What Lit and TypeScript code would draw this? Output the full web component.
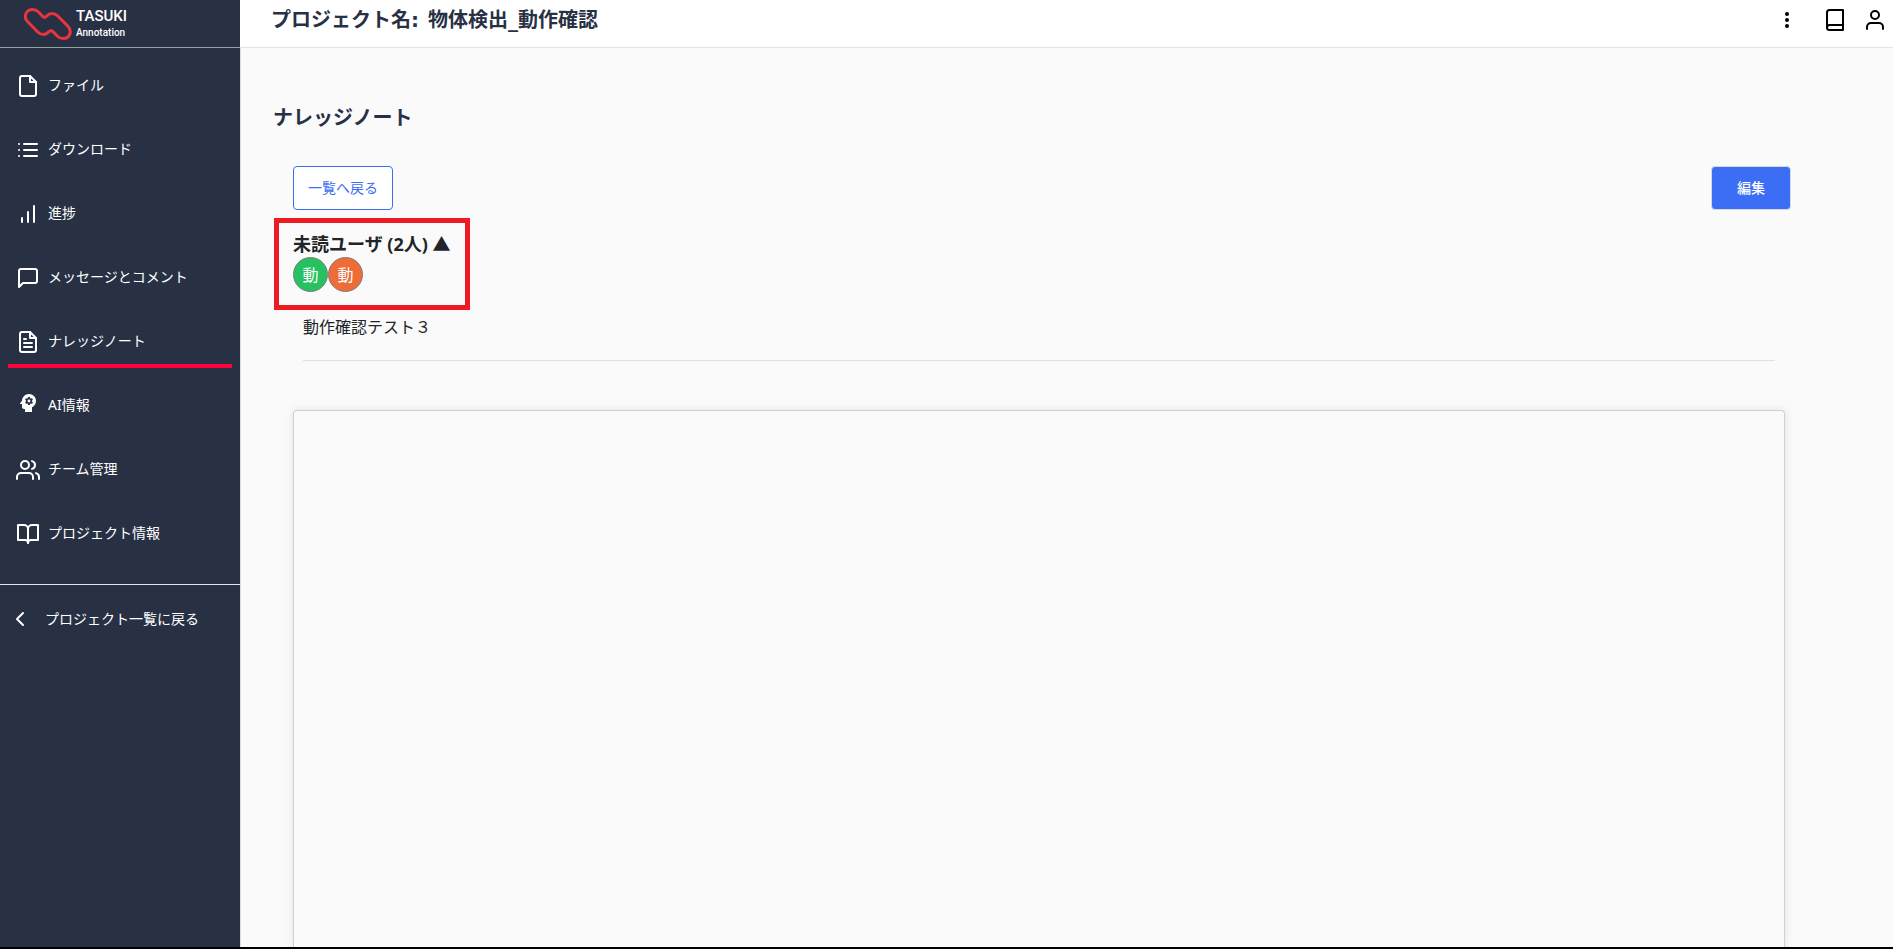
import { LitElement, html, svg, css } from "lit";
import type { SVGTemplateResult } from "lit";
import { customElement, property } from "lit/decorators.js";
import { classMap } from "lit/directives/class-map.js";

const icons: Record<string, SVGTemplateResult> = {
  file: svg`<path d="M14 2H6a2 2 0 0 0-2 2v16a2 2 0 0 0 2 2h12a2 2 0 0 0 2-2V8z"/><path d="M14 2v6h6"/>`,
  list: svg`<path d="M8 6h13M8 12h13M8 18h13M3 6h.01M3 12h.01M3 18h.01"/>`,
  bars: svg`<path d="M6 20v-4M12 20V10M18 20V4"/>`,
  message: svg`<path d="M21 15a2 2 0 0 1-2 2H7l-4 4V5a2 2 0 0 1 2-2h14a2 2 0 0 1 2 2z"/>`,
  note: svg`<path d="M14 2H6a2 2 0 0 0-2 2v16a2 2 0 0 0 2 2h12a2 2 0 0 0 2-2V8z"/><path d="M14 2v6h6M16 13H8M16 17H8M10 9H8"/>`,
  team: svg`<path d="M17 21v-2a4 4 0 0 0-4-4H5a4 4 0 0 0-4 4v2"/><circle cx="9" cy="7" r="4"/><path d="M23 21v-2a4 4 0 0 0-3-3.87M16 3.13a4 4 0 0 1 0 7.75"/>`,
  openBook: svg`<path d="M2 3h6a4 4 0 0 1 4 4v14a3 3 0 0 0-3-3H2z"/><path d="M22 3h-6a4 4 0 0 0-4 4v14a3 3 0 0 1 3-3h7z"/>`,
  back: svg`<path d="M15 18l-6-6 6-6"/>`,
  book: svg`<path d="M4 19.5A2.5 2.5 0 0 1 6.500 17H20"/><path d="M6.500 2H20v20H6.500A2.500 2.500 0 0 1 4 19.500v-15A2.500 2.500 0 0 1 6.500 2z"/>`,
  user: svg`<path d="M20 21v-2a4 4 0 0 0-4-4H8a4 4 0 0 0-4 4v2"/><circle cx="12" cy="7" r="4"/>`,
  more: svg`<g fill="currentColor" stroke="none"><circle cx="12" cy="6" r="2"/><circle cx="12" cy="12" r="2"/><circle cx="12" cy="18" r="2"/></g>`,
  ai: svg`<g fill="currentColor" stroke="none" transform="translate(0 -3)"><path d="M13 8.570c-.79 0-1.430.64-1.430 1.430s.64 1.430 1.430 1.430 1.430-.64 1.430-1.430-.64-1.430-1.430-1.430z"/><path d="M13 3C9.250 3 6.200 5.940 6.020 9.640L4.100 12.200c-.25.33-.01.8.4.8H6v3c0 1.100.9 2 2 2h1v3h7v-4.680c2.360-1.120 4-3.530 4-6.320 0-3.870-3.130-7-7-7zm3 7c0 .13-.01.26-.02.39l.83.66c.08.06.1.16.05.25l-.8 1.390c-.05.09-.16.12-.24.09l-.99-.4c-.21.16-.43.29-.67.39L14 13.830c-.01.1-.1.17-.2.17h-1.600c-.1 0-.18-.07-.2-.17l-.15-1.060c-.25-.1-.47-.23-.68-.39l-.99.4c-.09.03-.2 0-.25-.09l-.8-1.390c-.05-.08-.03-.19.05-.25l.84-.66c-.01-.13-.02-.26-.02-.39s.02-.27.04-.39l-.85-.66c-.08-.06-.1-.16-.05-.26l.8-1.380c.05-.09.15-.12.24-.09l1 .4c.2-.15.43-.29.67-.39L12 6.170c.02-.1.1-.17.2-.17h1.600c.1 0 .18.07.2.17l.15 1.060c.24.1.46.23.67.39l1-.4c.09-.03.2 0 .24.09l.8 1.380c.05.09.03.2-.05.26l-.85.66c.03.12.04.25.04.39z"/></g>`,
};

@customElement("ui-icon")
class UiIcon extends LitElement {
  @property() name = "file";

  static styles = css`
    :host { display: block; width: 24px; height: 24px; flex: none; }
    .glyph { display: block; fill: none; stroke: currentColor; stroke-width: 2; stroke-linecap: round; stroke-linejoin: round; }
  `;

  render() {
    return html`<svg class="glyph" width="24" height="24" viewBox="0 0 24 24" aria-hidden="true">${icons[this.name]}</svg>`;
  }
}

@customElement("side-bar")
class SideBar extends LitElement {
  private items = [
    { icon: "file", label: "ファイル" },
    { icon: "list", label: "ダウンロード" },
    { icon: "bars", label: "進捗" },
    { icon: "message", label: "メッセージとコメント" },
    { icon: "note", label: "ナレッジノート", active: true },
    { icon: "ai", label: "AI情報" },
    { icon: "team", label: "チーム管理" },
    { icon: "openBook", label: "プロジェクト情報" },
  ];

  static styles = css`
    :host { display: block; background: #283044; color: #fff; font-size: 14px; line-height: 24px; }
    a { color: inherit; text-decoration: none; }
    .brand { display: flex; align-items: flex-start; gap: 3px; box-sizing: border-box; height: 48px; padding: 7px 0 0 23px; border-bottom: 1px solid #93a1a3; }
    .mark { display: block; fill: none; stroke: #ea3440; stroke-width: 3; stroke-linejoin: round; }
    .words { display: flex; flex-direction: column; font-family: Roboto, "Liberation Sans", sans-serif; }
    .name { font-size: 15px; line-height: 19px; font-weight: 500; }
    .sub { font-size: 10px; line-height: 14px; font-weight: 500; }
    .nav { display: flex; flex-direction: column; gap: 8px; padding: 8px 8px 24px; border-bottom: 1px solid #e4e6ea; }
    .item { display: flex; align-items: center; gap: 8px; box-sizing: border-box; height: 56px; padding: 8px 8px 0; border-bottom: 4px solid transparent; }
    .label { padding-bottom: 2px; }
    .active { border-bottom-color: #ff003c; }
    .return { display: flex; align-items: center; gap: 13px; padding: 22px 8px; }
  `;

  render() {
    return html`
      <a class="brand" href="#">
        <svg class="mark" width="50" height="34" viewBox="0 0 50 34" aria-hidden="true">
          <path d="M4.500 14.500C2.500 12.500 1.700 9.700 3 6.500C4.300 3.500 7 2.500 9.500 2.500C12 2.500 14 3.500 15.500 5L19.500 9.300C21 10.800 22 10.800 23.500 9.300C25.500 7.200 27 6.500 29 6.500C31.500 6.500 33 7.300 34.500 8.800L44.500 18.800C46.800 21.100 47.700 23.700 47 26.500C46 30 43 31.500 40 31.500C37.500 31.500 36 30.700 34.500 29.200L30 24.600C28.500 23.100 27.500 23.100 26 24.600C24 26.900 22.500 27.500 20.500 27.500C18 27.500 16.500 26.700 15 25.200Z"/>
        </svg>
        <span class="words"><span class="name">TASUKI</span><span class="sub">Annotation</span></span>
      </a>
      <nav class="nav">
        ${this.items.map(
          (item) => html`<a class=${classMap({ item: true, active: !!item.active })} href="#"><ui-icon name=${item.icon}></ui-icon><span class="label">${item.label}</span></a>`
        )}
      </nav>
      <a class="return" href="#"><ui-icon name="back"></ui-icon><span>プロジェクト一覧に戻る</span></a>
    `;
  }
}

@customElement("top-bar")
class TopBar extends LitElement {
  static styles = css`
    :host { display: flex; align-items: flex-start; justify-content: space-between; box-sizing: border-box; height: 48px; padding: 8px 6px 0 31px; background: #fff; border-bottom: 1px solid #e4e4e4; }
    .title { display: flex; gap: 9px; margin: 0; color: #283044; font-family: "DejaVu Sans", "Noto Sans CJK JP", sans-serif; font-size: 20px; line-height: 24px; font-weight: 700; }
    .tools { display: flex; gap: 16px; color: #000; }
    .tool { padding: 0; border: 0; background: none; color: inherit; }
    .menu { margin-right: 8px; }
  `;

  render() {
    return html`
      <h1 class="title"><span>プロジェクト名:</span><span>物体検出_動作確認</span></h1>
      <div class="tools">
        <button class="tool menu" aria-label="メニュー"><ui-icon name="more"></ui-icon></button>
        <button class="tool" aria-label="マニュアル"><ui-icon name="book"></ui-icon></button>
        <button class="tool" aria-label="ユーザ"><ui-icon name="user"></ui-icon></button>
      </div>
    `;
  }
}

@customElement("knowledge-note")
class KnowledgeNote extends LitElement {
  static styles = css`
    :host { display: flex; flex-direction: column; box-sizing: border-box; min-height: 0; padding: 54px 102px 0 32px; overflow: hidden; background: #fafafa; border-left: 1px solid #dcdcdc; color: #212529; }
    .heading { margin: 0 0 32px; color: #283044; font-size: 20px; line-height: 32px; font-weight: 700; }
    .actions { display: flex; justify-content: space-between; margin-left: 20px; }
    .button { height: 44px; padding: 0 14px; border: 1px solid #3b6ef5; border-radius: 4px; background: #fff; color: #3b6ef5; font: inherit; font-size: 14px; line-height: 24px; }
    .primary { padding: 0 25px; border-color: #d5d9e4; background: #3b6ef5; color: #fff; font-weight: 500; }
    .unread { align-self: flex-start; margin: 8px 0 0 1px; padding: 9px 14px 13px; border: 5px solid #ed1c24; }
    .toggle { display: block; padding: 0; border: 0; background: none; color: inherit; font: inherit; font-size: 18px; line-height: 25px; font-weight: 700; }
    .people { display: flex; margin: 0; padding: 0; list-style: none; }
    .person { box-sizing: border-box; width: 35px; height: 35px; border: 1px solid #808080; border-radius: 50%; color: #fff; font-size: 16px; line-height: 34px; text-align: center; }
    .green { background: #26c262; }
    .orange { background: #ed6c37; }
    .subject { margin: 5px 16px 0 30px; padding-bottom: 21px; border-bottom: 1px solid #dee0e2; font-size: 16px; line-height: 24px; }
    .body { flex: 1; margin: 49px 6px 0 20px; border: 1px solid #ccd0da; border-bottom: 0; border-radius: 4px 4px 0 0; box-shadow: 0 0 8px rgba(0, 0, 0, 0.1); }
  `;

  render() {
    return html`
      <h2 class="heading">ナレッジノート</h2>
      <div class="actions">
        <button class="button">一覧へ戻る</button>
        <button class="button primary">編集</button>
      </div>
      <section class="unread">
        <button class="toggle" aria-expanded="true">未読ユーザ (2人) ▲</button>
        <ul class="people"><li class="person green">動</li><li class="person orange">動</li></ul>
      </section>
      <div class="subject">動作確認テスト３</div>
      <article class="body"></article>
    `;
  }
}

@customElement("app-root")
class AppRoot extends LitElement {
  static styles = css`
    :host { display: grid; grid-template-columns: 240px minmax(0, 1fr); grid-template-rows: auto minmax(0, 1fr); box-sizing: border-box; height: 100vh; border-bottom: 2px solid #000; font-family: "Noto Sans", "Noto Sans CJK JP", sans-serif; }
    .side { grid-row: 1 / 3; }
  `;

  render() {
    return html`
      <side-bar class="side"></side-bar>
      <top-bar></top-bar>
      <knowledge-note></knowledge-note>
    `;
  }
}
